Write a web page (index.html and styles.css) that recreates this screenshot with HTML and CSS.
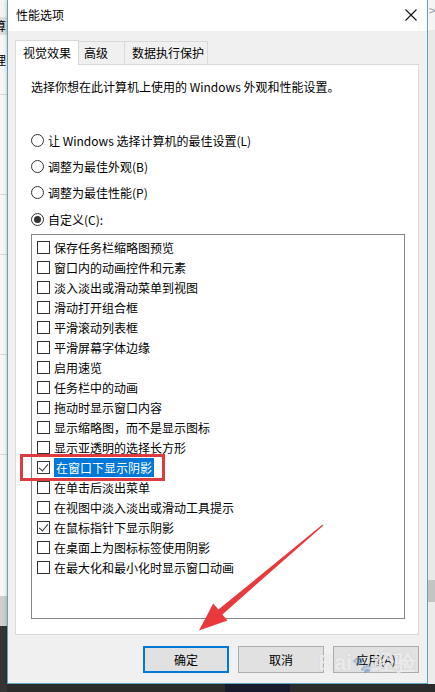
FILE: index.html
```html
<!DOCTYPE html>
<html>
  <head>
    <meta charset="UTF-8">
    <meta name="viewport" content="width=device-width, initial-scale=1.0">
    <title>性能选项</title>
    <link rel="stylesheet" href="styles.css">
  </head>

  <body>
    <div class="screen">
      <div class="desk-left">
        <div class="dl-top"></div>
        <div class="dl-bar">算</div>
        <div class="dl-pane">
          <div class="dl-row">理</div>
          <div class="dl-row tall"></div>
          <div class="dl-row"></div>
          <div class="dl-row tall"></div>
          <div class="dl-row tall"></div>
        </div>
        <div class="dl-gray"></div>
        <div class="dl-dark"></div>
      </div>

      <div class="dialog">
        <div class="titlebar">
          <span class="title">性能选项</span>
          <svg class="close" width="12" height="12" viewBox="0 0 12 12">
            <path d="M0.5 0.5 L11.5 11.5 M11.5 0.5 L0.5 11.5" stroke="#111" stroke-width="1.1" fill="none"/>
          </svg>
        </div>

        <div class="dialog-body">
          <div class="tabs">
            <div class="tab tab-active">视觉效果</div>
            <div class="tab tab-adv">高级</div>
            <div class="tab tab-dep">数据执行保护</div>
          </div>

          <div class="panel">
            <p class="intro">选择你想在此计算机上使用的 Windows 外观和性能设置。</p>

            <div class="radios">
              <div class="radio"><span class="radio-dot"></span>让 Windows 选择计算机的最佳设置(L)</div>
              <div class="radio"><span class="radio-dot"></span>调整为最佳外观(B)</div>
              <div class="radio"><span class="radio-dot"></span>调整为最佳性能(P)</div>
              <div class="radio"><span class="radio-dot radio-on"></span>自定义(C):</div>
            </div>

            <div class="list">
              <div class="item"><span class="box"></span>保存任务栏缩略图预览</div>
              <div class="item"><span class="box"></span>窗口内的动画控件和元素</div>
              <div class="item"><span class="box"></span>淡入淡出或滑动菜单到视图</div>
              <div class="item"><span class="box"></span>滑动打开组合框</div>
              <div class="item"><span class="box"></span>平滑滚动列表框</div>
              <div class="item"><span class="box"></span>平滑屏幕字体边缘</div>
              <div class="item"><span class="box"></span>启用速览</div>
              <div class="item"><span class="box"></span>任务栏中的动画</div>
              <div class="item"><span class="box"></span>拖动时显示窗口内容</div>
              <div class="item"><span class="box"></span>显示缩略图，而不是显示图标</div>
              <div class="item"><span class="box"></span>显示亚透明的选择长方形</div>
              <div class="item"><span class="box box-on"></span><span class="selected">在窗口下显示阴影</span></div>
              <div class="item"><span class="box"></span>在单击后淡出菜单</div>
              <div class="item"><span class="box"></span>在视图中淡入淡出或滑动工具提示</div>
              <div class="item"><span class="box box-on"></span>在鼠标指针下显示阴影</div>
              <div class="item"><span class="box"></span>在桌面上为图标标签使用阴影</div>
              <div class="item"><span class="box"></span>在最大化和最小化时显示窗口动画</div>
            </div>
          </div>

          <div class="buttons">
            <button class="btn btn-default">确定</button>
            <button class="btn">取消</button>
            <button class="btn">应用(A)</button>
          </div>
        </div>
      </div>

      <div class="desk-right">
        <div class="dr-top">&gt;</div>
        <div class="dr-mid"></div>
        <div class="dr-band"></div>
        <div class="dr-low"></div>
      </div>

      <div class="taskbar">
        <div class="tb-app"></div>
      </div>

      <div class="mark-box"></div>

      <svg class="arrow" width="435" height="692" viewBox="0 0 435 692">
        <polygon fill="#e8393c" points="323.4,525.4 222.4,614.4 227.5,620.5 199,630.5 213.2,603.4 218.4,609.6 322.6,524.6"/>
      </svg>

      <div class="watermark">Bai<span class="paw">&#x1F43E;</span>经验</div>
    </div>
  </body>
</html>
```

FILE: styles.css
```css
* {
  box-sizing: border-box;
}

body {
  margin: 0;
  font-family: "Noto Sans CJK SC", "Noto Sans", sans-serif;
  font-size: 12px;
  color: #000;
}

.screen {
  position: relative;
  width: 435px;
  height: 692px;
  overflow: hidden;
  display: grid;
  grid-template-columns: 7px 421px 7px;
  grid-template-rows: 684px 8px;
  background: #2b2b2b;
}

/* desktop behind the dialog */
.desk-left {
  display: flex;
  flex-direction: column;
  overflow: hidden;
  grid-row: 1 / 3;
}

.dl-top {
  height: 17px;
  background: #f4f4f4;
}

.dl-bar {
  height: 18px;
  background: #dedede;
  font-size: 12px;
  line-height: 18px;
  text-indent: -6px;
  white-space: nowrap;
}

.dl-pane {
  flex: 1;
  background: #f7f7f7;
  display: flex;
  flex-direction: column;
}

.dl-row {
  height: 60px;
  border-bottom: 1px solid #d8d8d8;
  line-height: 50px;
  text-indent: -6px;
  white-space: nowrap;
}

.dl-row.tall {
  height: 100px;
}

.dl-gray {
  height: 30px;
  background: #cfcfcf;
}

.dl-dark {
  height: 66px;
  background: #353535;
}

.desk-right {
  display: flex;
  flex-direction: column;
  overflow: hidden;
  grid-row: 1 / 2;
}

.dr-top {
  height: 30px;
  background: #f4f4f4;
  color: #999;
  line-height: 20px;
  padding-left: 1px;
}

.dr-mid {
  flex: 1;
  background: #e9e9e9;
}

.dr-band {
  height: 22px;
  background: #c4c4c4;
}

.dr-low {
  height: 82px;
  background: #ececec;
}

.taskbar {
  grid-column: 2 / 4;
  grid-row: 2;
  background: #2b2b2b;
  display: flex;
  padding-left: 218px;
}

.tb-app {
  width: 65px;
  background: #161a2c;
}

/* dialog */
.dialog {
  grid-row: 1;
  grid-column: 2;
  display: flex;
  flex-direction: column;
  background: #f0f0f0;
  border: 1px solid #5aa6bd;
  border-top: none;
  box-shadow: 0 0 4px rgba(0, 0, 0, 0.25);
}

.titlebar {
  height: 31px;
  background: #fff;
  display: flex;
  align-items: center;
  justify-content: space-between;
  padding: 0 10px 2px 8px;
}

.title {
  font-size: 12px;
}

.dialog-body {
  flex: 1;
  display: flex;
  flex-direction: column;
  padding: 9px 8px 10px 7px;
}

.tabs {
  display: flex;
  height: 24px;
  align-items: flex-end;
}

.tab {
  height: 23px;
  border: 1px solid #d9d9d9;
  border-bottom: none;
  border-left: none;
  background: #f0f0f0;
  line-height: 21px;
}

.tab-active {
  height: 25px;
  background: #fff;
  border-left: 1px solid #d9d9d9;
  margin-bottom: -1px;
  padding: 0 7px;
  position: relative;
  line-height: 24px;
}

.tab-adv {
  padding: 0 16px 0 5px;
}

.tab-dep {
  padding: 0 3px 0 7px;
}

.panel {
  height: 571px;
  background: #fff;
  border: 1px solid #d9d9d9;
  padding: 13px 13px 15px 15px;
  display: flex;
  flex-direction: column;
}

.intro {
  margin: 0;
  line-height: 18px;
}

.radios {
  margin-top: 31px;
  display: flex;
  flex-direction: column;
}

.radio {
  height: 26.3px;
  display: flex;
  align-items: center;
}

.radio-dot {
  width: 13px;
  height: 13px;
  border: 1px solid #333;
  border-radius: 50%;
  margin-right: 4px;
  display: flex;
  align-items: center;
  justify-content: center;
}

.radio-on::after {
  content: "";
  width: 7px;
  height: 7px;
  border-radius: 50%;
  background: #333;
}

.list {
  margin-top: 2px;
  flex: 1;
  border: 1px solid #828790;
  padding: 2px 5px;
  display: flex;
  flex-direction: column;
}

.item {
  height: 20px;
  display: flex;
  align-items: center;
  white-space: nowrap;
}

.box {
  width: 13px;
  height: 13px;
  border: 1px solid #333;
  margin-right: 4px;
  flex: none;
  position: relative;
}

.box-on::after {
  content: "";
  position: absolute;
  left: 3px;
  top: 0px;
  width: 4px;
  height: 8px;
  border: solid #333;
  border-width: 0 1px 1px 0;
  transform: rotate(40deg);
}

.selected {
  background: #0078d7;
  color: #fff;
  padding: 0 2px;
  line-height: 19px;
}

.buttons {
  margin-top: 11px;
  display: flex;
  justify-content: flex-end;
  gap: 9px;
}

.btn {
  width: 86px;
  height: 27px;
  font-family: inherit;
  font-size: 12px;
  color: #000;
  background: #e1e1e1;
  border: 1px solid #adadad;
  padding: 0;
}

.btn-default {
  border: 2px solid #0078d7;
}

/* annotations drawn on the screenshot */
.mark-box {
  position: absolute;
  left: 20px;
  top: 454px;
  width: 145px;
  height: 27px;
  border: 3px solid #dd3b3f;
}

.arrow {
  position: absolute;
  left: 0;
  top: 0;
  pointer-events: none;
}

.watermark {
  position: absolute;
  left: 318px;
  top: 648px;
  font-family: "Liberation Sans", sans-serif;
  font-size: 22px;
  font-weight: bold;
  color: rgba(255, 255, 255, 0.7);
  text-shadow: 0 0 1px rgba(120, 120, 120, 0.35);
  pointer-events: none;
}

.paw {
  font-size: 16px;
  opacity: 0.5;
}
```
